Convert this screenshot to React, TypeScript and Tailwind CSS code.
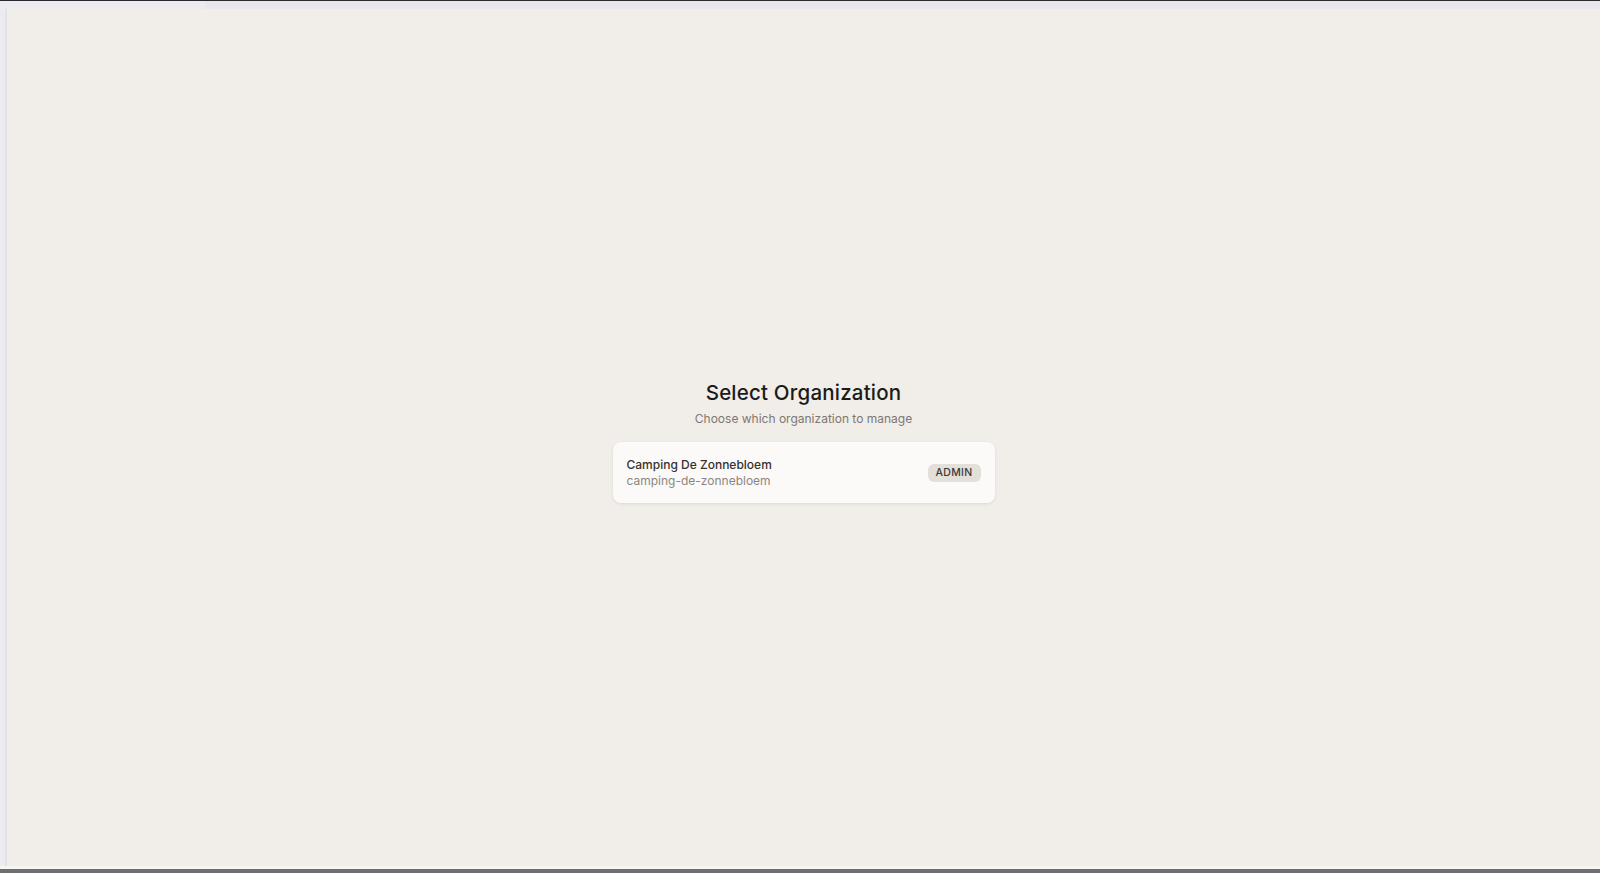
import { useState } from 'react';

interface Org {
  id: string;
  name: string;
  slug: string;
  role: string;
}

const ORGS: Org[] = [
  { id: 'org_1', name: 'Camping De Zonnebloem', slug: 'camping-de-zonnebloem', role: 'admin' },
];

export default function App() {
  const [selected, setSelected] = useState<string | null>(null);

  return (
    <div
      className="flex h-[873px] w-[1600px] flex-col overflow-hidden bg-[#e9e8ec]"
      style={{ fontFamily: 'Inter, "Noto Sans", sans-serif' }}
    >
      {/* browser-ish frame */}
      <div className="h-px w-full shrink-0 bg-[#2a2a2e]" />
      <div className="flex h-[8px] w-full shrink-0">
        <div className="w-[205px] bg-[#ececef]" />
        <div className="flex-1 bg-[#e8e8ec]" />
      </div>

      <div className="flex min-h-0 flex-1">
        <div className="flex w-[7px] shrink-0">
          <div className="w-[5px] bg-[#ececf0]" />
          <div className="w-[2px] bg-[#e2e1e5]" />
        </div>

        <main className="flex flex-1 flex-col items-center bg-[#f1ede8] pt-[370px]">
          <h1 className="text-[20.5px] leading-[28px] font-medium tracking-[0.2px] text-[#1c1b1a]">
            Select Organization
          </h1>
          <p className="mt-0.5 text-[12px] leading-5 text-[#7d7873]">
            Choose which organization to manage
          </p>

          <div className="mt-[13px] flex w-[382px] flex-col gap-2">
            {ORGS.map(org => (
              <button
                key={org.id}
                onClick={() => setSelected(org.id)}
                className={`flex h-[61px] w-full items-center justify-between rounded-lg bg-[#fbfaf8] px-3.5 text-left shadow-[0_1px_3px_rgba(60,50,40,0.10)] ${selected === org.id ? 'ring-1 ring-[#d6d1ca]' : ''}`}
              >
                <div className="flex flex-col">
                  <span className="text-[12px] leading-4 font-medium text-[#34322f]">{org.name}</span>
                  <span className="text-[12px] leading-4 text-[#8b8681]">{org.slug}</span>
                </div>
                <span className="rounded-md bg-[#e3dfd9] px-2 py-px text-[10.5px] leading-4 font-medium tracking-[0.3px] text-[#3b3936] uppercase">
                  {org.role}
                </span>
              </button>
            ))}
          </div>
        </main>
      </div>

      <div className="h-[3px] w-full shrink-0 bg-[#f7f5f2]" />
      <div className="h-[4px] w-full shrink-0 bg-[#6e6d70]" />
    </div>
  );
}
